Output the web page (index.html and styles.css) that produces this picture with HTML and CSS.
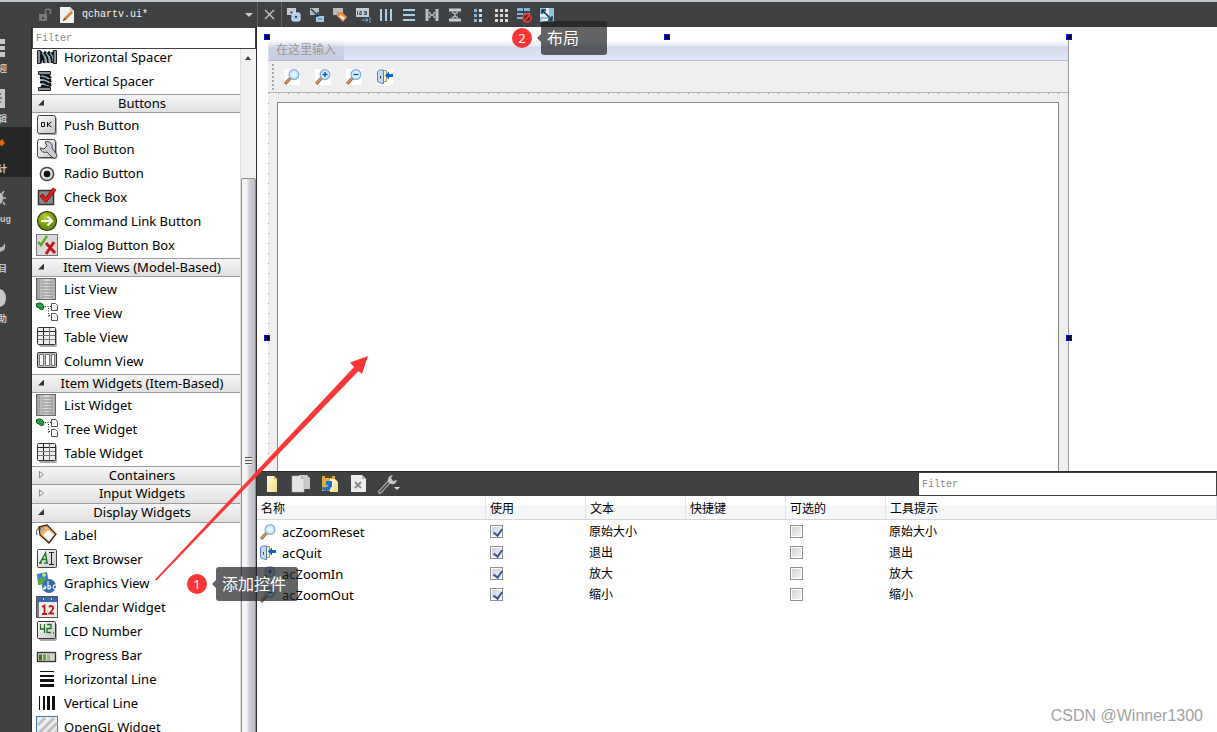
FILE: index.html
```html
<!DOCTYPE html>
<html lang="zh-CN">
<head>
<meta charset="utf-8">
<title>qchartv.ui</title>
<link rel="stylesheet" href="styles.css">
</head>
<body>
<svg class="defs" aria-hidden="true">
  <defs>
    <linearGradient id="gBtn" x1="0" y1="0" x2="1" y2="1"><stop offset="0" stop-color="#fff"/><stop offset="1" stop-color="#c4c4c4"/></linearGradient>
    <linearGradient id="gDark" x1="0" y1="0" x2="1" y2="0"><stop offset="0" stop-color="#999"/><stop offset=".5" stop-color="#ddd"/><stop offset="1" stop-color="#aaa"/></linearGradient>
    <radialGradient id="gGreen" cx=".4" cy=".3"><stop offset="0" stop-color="#b7d43a"/><stop offset="1" stop-color="#6d8f0c"/></radialGradient>
    <radialGradient id="gLens"><stop offset="0" stop-color="#f0fdff"/><stop offset="1" stop-color="#b9e6f4"/></radialGradient>
    <linearGradient id="gPage" x1="0" y1="0" x2="1" y2="1"><stop offset="0" stop-color="#fffce0"/><stop offset="1" stop-color="#f2dc7c"/></linearGradient>
  </defs>
  <symbol id="hspacer" viewBox="0 0 22 22"><path d="M4 6q3 3 0 11M4 6q5 4 4 11M8 6q5 4 4 11M12 6q5 4 4 11M16 6q3 4 2 10" stroke="#111" stroke-width="3" fill="none"/><path d="M6 7q4 4 3 9M10 7q4 4 3 9M14 7q4 4 3 9" stroke="#86a9bf" stroke-width="1.3" fill="none"/><path d="M1.500 4.500h3v13h-3zM17.500 4.500h3v13h-3z" fill="#8a908e" stroke="#222"/></symbol>
  <symbol id="vspacer" viewBox="0 0 22 22"><path d="M4 5q8 0 11 3M4 8q8 0 11 4M4 12q8 0 11 4M5 16h9M4 8l10-3M5 13l10-4M5 17l10-4" stroke="#111" stroke-width="2.400" fill="none"/><path d="M5 6q6 1 8 3M5 10q6 0 8 3M6 14l7 2" stroke="#86a9bf" stroke-width="1.300" fill="none"/><path d="M2.500 1.500h12v3h-12zM2.500 17.500h12v3h-12z" fill="#8a908e" stroke="#222"/></symbol>
  <symbol id="ok" viewBox="0 0 22 22"><rect x="2" y="3" width="19" height="18" rx="2" fill="#aaa"/><rect x="1.500" y="1.500" width="18" height="18" rx="2" fill="url(#gBtn)" stroke="#444"/><path d="M5.500 8.500h3v4h-3zM11.500 8v5M15.500 8l-3.500 2.500 3.500 2.500" fill="none" stroke="#111"/></symbol>
  <symbol id="tool" viewBox="0 0 22 22"><rect x="2" y="3" width="19" height="18" rx="2" fill="#aaa"/><rect x="1.500" y="1.500" width="18" height="18" rx="2" fill="url(#gBtn)" stroke="#444"/><path d="M9 4a5 5 0 0 1 7 6l5 7q0 4-4 3l-6-6a5 5 0 0 1-7-4l4 1 3-3z" fill="#c7cbd2" stroke="#444"/></symbol>
  <symbol id="radio" viewBox="0 0 22 22"><circle cx="11" cy="12" r="6.600" fill="url(#gBtn)" stroke="#444" stroke-width="1.500"/><circle cx="11" cy="12" r="3.300" fill="#111"/></symbol>
  <symbol id="check" viewBox="0 0 22 22"><rect x="2.500" y="4.500" width="15" height="14" fill="#8c8c8c" stroke="#333" stroke-width="1.500"/><path d="M4 10l3-2 2.500 4L17 2l3 2-9.500 12H9z" fill="#dc1f1f" stroke="#7d0909" stroke-width=".8"/></symbol>
  <symbol id="cmd" viewBox="0 0 22 22"><circle cx="11" cy="11" r="9.500" fill="url(#gGreen)" stroke="#2e3c05" stroke-width="1.200"/><path d="M5 11h11M11.500 6.500L16 11l-4.500 4.500" stroke="#fff" stroke-width="2.200" fill="none"/></symbol>
  <symbol id="dialog" viewBox="0 0 22 22"><rect x=".5" y=".5" width="21" height="21" fill="#d9d9d9" stroke="#777"/><path d="M2 8l3 3 6-9" fill="none" stroke="#59b02d" stroke-width="2.500"/><path d="M10 9l9 10M18 8l-8 12" stroke="#c0181f" stroke-width="3"/></symbol>
  <symbol id="list" viewBox="0 0 22 22"><rect x=".5" y=".5" width="19" height="21" fill="url(#gDark)" stroke="#666"/><path d="M3 4h1M6 4h11M3 7h1M6 7h11M3 10h1M6 10h11M3 13h1M6 13h11M3 16h1M6 16h11M3 19h1M6 19h11" stroke="#777" stroke-width=".8"/></symbol>
  <symbol id="tree" viewBox="0 0 22 22"><path d="M0 2q4-2 6-.5Q9 4 7.500 7 5 9 3 6 0 6 0 2z" fill="#2c9b3e" stroke="#125c20"/><path d="M9 4.500h6M12.500 6v9M13 13.500h3" stroke="#222" stroke-dasharray="1 1.500" fill="none"/><path d="M15.500 1.500h4l2 2v5h-6zM15.500 11.500h4l2 2v5h-6z" fill="#f4f4f4" stroke="#555"/></symbol>
  <symbol id="table" viewBox="0 0 22 22"><rect x="3" y="3" width="18" height="18" rx="2" fill="#aaa"/><rect x="1.500" y="1.500" width="18" height="17" rx="1" fill="#eee" stroke="#333"/><path d="M2 5.500h17M7.500 2v16" stroke="#222"/><path d="M2 9.500h17M2 13.500h17M13.500 2v16" stroke="#777"/></symbol>
  <symbol id="column" viewBox="0 0 22 22"><rect x="1.500" y="2.500" width="19" height="15" rx="1" fill="#bbb" stroke="#333"/><path d="M3.500 4.500h4v11h-4zM9.500 4.500h4v11h-4zM15.500 4.500h3v11h-3z" fill="#fff" stroke="#777"/></symbol>
  <symbol id="label" viewBox="0 0 22 22"><path d="M3 3l8-2 9 9-7 9L4 11z" fill="#eeb26e" stroke="#3c2814" stroke-width="1.300"/><path d="M12 6l6 5-5 6-6-6z" fill="#fff"/><circle cx="6" cy="5" r="1.300" fill="#fff" stroke="#444" stroke-width=".6"/><path d="M5 5Q-1 3 1 11" fill="none" stroke="#444"/></symbol>
  <symbol id="text" viewBox="0 0 22 22"><rect x="1.500" y="1.500" width="19" height="18" rx="1" fill="url(#gBtn)" stroke="#444"/><path d="M3 15h3M8 15h4M4 15l5.500-10L11 15M6 11.500h5" stroke="#217427" stroke-width="1.500" fill="none"/><path d="M13 4.500h5M15.500 5v11M13 16.500h5" stroke="#222" fill="none"/></symbol>
  <symbol id="graphics" viewBox="0 0 22 22"><path d="M1 2l10-2 2 11-11 2z" fill="#3c80dd"/><path d="M2 8l4-3 5 3 1 3-10 2z" fill="#5cad3f"/><circle cx="8" cy="3" r="1.800" fill="#f2e63b"/><circle cx="13" cy="14" r="7" fill="#3a6cab"/><path d="M7 15.500a1.500 1.500 0 1 0 2-1.500v3M12 9v8M12 14a1.600 1.600 0 1 1 0 2.500M20.500 13.500a2 2 0 1 0 0 3" fill="none" stroke="#fff" stroke-width="1.100"/></symbol>
  <symbol id="calendar" viewBox="0 0 22 22"><rect x=".5" y=".5" width="21" height="21" fill="#ececec" stroke="#555"/><path d="M1 1h20v5H1z" fill="#3968ad"/><path d="M7 3h1M15 3h1" stroke="#fff" stroke-width="1.500"/><path d="M1 6h2v15H1z" fill="#777"/><path d="M6 11l2.500-1.500V18M6 18h5M13 11q2-2 4 0 1 2-3.500 6.500H18" stroke="#bd1c25" stroke-width="1.800" fill="none"/></symbol>
  <symbol id="lcd" viewBox="0 0 22 22"><rect x="3" y="3" width="18" height="18" rx="2" fill="#aaa"/><rect x="1.500" y="1.500" width="18" height="17" rx="1" fill="url(#gBtn)" stroke="#333"/><path d="M4.500 4v5h4M8.500 4v9M11 4.500h4v4h-4v4h4M17 13h1" fill="none" stroke="#1b6e22" stroke-width="1.300"/></symbol>
  <symbol id="progress" viewBox="0 0 22 22"><rect x="1.500" y="8.500" width="18" height="9" fill="#cfd6ca" stroke="#333" stroke-width="1.300"/><path d="M3 10.500h3v6H3z" fill="#3c7514"/><path d="M7 10.500h3v6H7z" fill="#6e9750"/><path d="M11 10.500h3v6h-3z" fill="#a0b490"/></symbol>
  <symbol id="hline" viewBox="0 0 22 22"><path d="M4 3.500h14" stroke="#111"/><path d="M4 8h14" stroke="#111" stroke-width="2"/><path d="M4 12.500h14" stroke="#111" stroke-width="3"/><path d="M4 17.500h14" stroke="#111" stroke-width="3"/></symbol>
  <symbol id="vline" viewBox="0 0 22 22"><path d="M3.500 4v14" stroke="#111"/><path d="M8 4v14" stroke="#111" stroke-width="2"/><path d="M12.500 4v14" stroke="#111" stroke-width="3"/><path d="M17.500 4v14" stroke="#111" stroke-width="3"/></symbol>
  <symbol id="opengl" viewBox="0 0 22 22"><rect x=".5" y=".5" width="21" height="21" fill="#eee" stroke="#3d79c2"/><path d="M2 9l7-7M2 18L18 2M7 21L21 7M15 21l6-6" stroke="#c0c0c0" stroke-width="3"/></symbol>

  <symbol id="zoom" viewBox="0 0 16 16"><path d="M1 15l5.500-6" stroke="#7c5a3a" stroke-width="3"/><path d="M1 14.500L6 9.500" stroke="#eea04a" stroke-width="1.500"/><circle cx="10" cy="5.500" r="4.900" fill="url(#gLens)" stroke="#8fa9dc" stroke-width="1.200"/></symbol>
  <symbol id="zoomin" viewBox="0 0 16 16"><use href="#zoom"/><path d="M7.500 5.500h5M10 3v5" stroke="#1350b0" stroke-width="1.400"/></symbol>
  <symbol id="zoomout" viewBox="0 0 16 16"><use href="#zoom"/><path d="M7.500 5.500h5" stroke="#1350b0" stroke-width="1.400"/></symbol>
  <symbol id="quit" viewBox="0 0 16 16"><path d="M5.500 1.500h4v11h-4z" fill="#ffefb0" stroke="#9c9378"/><path d="M.5 2.500l2-1.500h4v13.500l-3-.5-3-1.500z" fill="#c3daf6" stroke="#5c7cb4"/><path d="M3.500 7v2.500" stroke="#234"/><path d="M8 6.500L12 2.500v2.500h4v3h-4v2.500z" fill="#0a63d0"/></symbol>
</svg>

<div class="app">
  <header class="topbar">
    <div class="docbar">
      <svg width="14" height="14" viewBox="0 0 14 14"><path d="M1 6h8v7H1z" fill="#77797b"/><path d="M7.500 6V3q0-2 2.500-2t2.500 2v3" fill="none" stroke="#77797b" stroke-width="1.600"/><path d="M4 9h2v2H4z" fill="#404142"/></svg>
      <svg width="14" height="16" viewBox="0 0 14 16"><path d="M0 0h10l4 4v12H0z" fill="#f1f1f1"/><path d="M10 0v4h4" fill="#ccc"/><path d="M3 14l1-3 7-7 2 1.500L6 13z" fill="#d58328"/><path d="M3 14l1-3 1.500 1.500z" fill="#333"/></svg>
      <span class="docname">qchartv.ui*</span>
      <button class="drop" aria-label="打开文档列表"></button>
    </div>
    <button class="tb close" aria-label="关闭"><svg width="11" height="11" viewBox="0 0 11 11"><path d="M1 1l9 9M10 1l-9 9" stroke="#c8c8c8" stroke-width="1.300"/></svg></button>
    <nav class="tools">
      <button class="tb" aria-label="编辑控件"><svg width="16" height="16" viewBox="0 0 16 16"><path d="M1 1h9v7H1z" fill="#c9cbcc"/><path d="M6 6h8v8H6z" fill="#a9c9ee" stroke="#dde8f4" /><path d="M9 9h2v2H9z" fill="#1a4e86"/><path d="M4.500 4.500h2v2h-2zM13.500 4.500h2v2h-2zM4.500 13.500h2v2h-2zM13.500 13.500h2v2h-2z" fill="#2a3f58"/></svg></button>
      <button class="tb" aria-label="编辑信号/槽"><svg width="16" height="16" viewBox="0 0 16 16"><path d="M1 1h9v7H1z" fill="#b9bcbd"/><path d="M7 9h8v6H7z" fill="#a6c8e6"/><path d="M9 12h4" stroke="#416f99"/><path d="M2 2l7 7M9 5v4H5" stroke="#1c3850" stroke-width="1.400" fill="none"/></svg></button>
      <button class="tb" aria-label="编辑伙伴"><svg width="16" height="16" viewBox="0 0 16 16"><path d="M1 1h10v7H1z" fill="#b9bcbd"/><path d="M5 5h5l5 5-4 5-6-6z" fill="#e98b4c"/><path d="M9 8l4 3-2 2-4-4z" fill="#fff3df"/></svg></button>
      <button class="tb" aria-label="编辑 Tab 顺序"><svg width="16" height="16" viewBox="0 0 16 16"><path d="M1 1h13v9H1z" fill="#c7cbd0"/><path d="M2.500 4v4M4.500 4.500h2v1.500h-2v1.500h2.500M9 4.500h2.500v3H9M9 6h2" stroke="#34536f" fill="none"/><path d="M7 13h6M11 11l2 2-2 2M15 10v6" stroke="#73a9e0" fill="none"/></svg></button>
      <button class="tb" aria-label="水平布局"><svg width="16" height="16" viewBox="0 0 16 16"><path d="M3 2v12M8 2v12M13 2v12" stroke="#a9cfe9" stroke-width="2"/></svg></button>
      <button class="tb" aria-label="垂直布局"><svg width="16" height="16" viewBox="0 0 16 16"><path d="M2 3h12M2 8h12M2 13h12" stroke="#a9cfe9" stroke-width="2"/></svg></button>
      <button class="tb" aria-label="水平分裂器"><svg width="16" height="16" viewBox="0 0 16 16"><path d="M3 2v12M13 2v12" stroke="#b7c0c4" stroke-width="3"/><path d="M5 5l2 3-2 3M11 5L9 8l2 3M6 8h4" stroke="#a8acae" stroke-width="1.500" fill="none"/></svg></button>
      <button class="tb" aria-label="垂直分裂器"><svg width="16" height="16" viewBox="0 0 16 16"><path d="M2 3h12M2 13h12" stroke="#c9cdcf" stroke-width="3"/><path d="M5 5l3 2 3-2M5 11l3-2 3 2M8 6v4" stroke="#b8bcbe" stroke-width="1.500" fill="none"/></svg></button>
      <button class="tb" aria-label="表单布局"><svg width="16" height="16" viewBox="0 0 16 16"><path d="M4 2h3v3H4zM4 7h3v3H4zM4 12h3v3H4z" fill="#88b4dc"/><path d="M9 2h3v3H9zM9 7h3v3H9zM9 12h3v3H9z" fill="#c3dff4"/></svg></button>
      <button class="tb" aria-label="栅格布局"><svg width="16" height="16" viewBox="0 0 16 16"><path d="M2 2h3v3H2zM7 2h3v3H7zM12 2h3v3h-3zM2 7h3v3H2zM7 7h3v3H7zM12 7h3v3h-3zM2 12h3v3H2zM7 12h3v3H7zM12 12h3v3h-3z" fill="#d6d8d6"/></svg></button>
      <button class="tb" aria-label="打破布局"><svg width="16" height="16" viewBox="0 0 16 16"><path d="M1 1h6v3H1zM8 1h6v3H8zM1 6h6v2H1zM8 6h6v2H8zM1 10h6v2H1z" fill="#7fb4de"/><circle cx="11" cy="11" r="4" fill="#59201f" stroke="#d8403b" stroke-width="1.800"/><path d="M8 14l6-6" stroke="#d8403b" stroke-width="1.800"/></svg></button>
      <button class="tb" aria-label="调整大小"><svg width="16" height="16" viewBox="0 0 16 16"><path d="M1 1h14v14H1z" fill="#8fc3de"/><path d="M1 10h9V1H7v6H1zM3 12h6v3H3z" fill="#e4eef4"/><path d="M3 3l10 10M3 7V3h4M9 13h4V9" stroke="#14364b" stroke-width="1.500" fill="none"/></svg></button>
    </nav>
  </header>

  <div class="body">
    <nav class="modes">
      <button class="mode"><svg width="8" height="22" viewBox="0 0 8 22"><path d="M0 2h5v5H0zM0 9h5v4H0zM0 15h5v5H0z" fill="#c4c6c7"/></svg><span>欢迎</span></button>
      <button class="mode"><svg width="8" height="22" viewBox="0 0 8 22"><path d="M0 2h5v19H0z" fill="#c4c6c7"/><path d="M0 7h1M0 11h2M0 15h1" stroke="#333"/></svg><span>编辑</span></button>
      <button class="mode active"><svg width="8" height="22" viewBox="0 0 8 22"><path d="M0 4l2-2 3 4-3 3-2-1z" fill="#d76b0a"/></svg><span>设计</span></button>
      <button class="mode"><svg width="8" height="22" viewBox="0 0 8 22"><path d="M0 6q3 0 3 5t-3 6z" fill="#b9bbbc"/><path d="M2 7l2-3M3 11h3M3 15l2 3" stroke="#b9bbbc" stroke-width="1.500"/></svg><span class="wide">Debug</span></button>
      <button class="mode"><svg width="8" height="22" viewBox="0 0 8 22"><path d="M0 10q3 1 5-4 1 7-3 8l-2 1z" fill="#b9bbbc"/></svg><span>项目</span></button>
      <button class="mode"><svg width="8" height="22" viewBox="0 0 8 22"><path d="M0 2q6 2 6 9t-6 9z" fill="#c4c6c7"/></svg><span>帮助</span></button>
    </nav>

    <aside class="widgets">
      <input class="filter" type="text" placeholder="Filter" aria-label="过滤控件">
      <div class="scroller">
        <div class="tree">
          <ul class="items first">
            <li><svg><use href="#hspacer"/></svg>Horizontal Spacer</li>
            <li><svg><use href="#vspacer"/></svg>Vertical Spacer</li>
          </ul>
          <h3 class="cat open">Buttons</h3>
          <ul class="items">
            <li><svg><use href="#ok"/></svg>Push Button</li>
            <li><svg><use href="#tool"/></svg>Tool Button</li>
            <li><svg><use href="#radio"/></svg>Radio Button</li>
            <li><svg><use href="#check"/></svg>Check Box</li>
            <li><svg><use href="#cmd"/></svg>Command Link Button</li>
            <li><svg><use href="#dialog"/></svg>Dialog Button Box</li>
          </ul>
          <h3 class="cat open">Item Views (Model-Based)</h3>
          <ul class="items">
            <li><svg><use href="#list"/></svg>List View</li>
            <li><svg><use href="#tree"/></svg>Tree View</li>
            <li><svg><use href="#table"/></svg>Table View</li>
            <li><svg><use href="#column"/></svg>Column View</li>
          </ul>
          <h3 class="cat open">Item Widgets (Item-Based)</h3>
          <ul class="items">
            <li><svg><use href="#list"/></svg>List Widget</li>
            <li><svg><use href="#tree"/></svg>Tree Widget</li>
            <li><svg><use href="#table"/></svg>Table Widget</li>
          </ul>
          <h3 class="cat">Containers</h3>
          <h3 class="cat">Input Widgets</h3>
          <h3 class="cat open">Display Widgets</h3>
          <ul class="items">
            <li><svg><use href="#label"/></svg>Label</li>
            <li><svg><use href="#text"/></svg>Text Browser</li>
            <li><svg><use href="#graphics"/></svg>Graphics View</li>
            <li><svg><use href="#calendar"/></svg>Calendar Widget</li>
            <li><svg><use href="#lcd"/></svg>LCD Number</li>
            <li><svg><use href="#progress"/></svg>Progress Bar</li>
            <li><svg><use href="#hline"/></svg>Horizontal Line</li>
            <li><svg><use href="#vline"/></svg>Vertical Line</li>
            <li><svg><use href="#opengl"/></svg>OpenGL Widget</li>
          </ul>
        </div>
        <div class="scrollbar"><span class="up"></span><div class="thumb"><i></i></div></div>
      </div>
    </aside>

    <main class="work">
      <section class="canvas">
        <div class="form">
          <div class="menubar"><span>在这里输入</span></div>
          <div class="formtools">
            <i class="grip"></i>
            <button aria-label="原始大小"><svg><use href="#zoom"/></svg></button>
            <button aria-label="放大"><svg><use href="#zoomin"/></svg></button>
            <button aria-label="缩小"><svg><use href="#zoomout"/></svg></button>
            <button aria-label="退出"><svg><use href="#quit"/></svg></button>
          </div>
          <div class="central"><div class="view"></div></div>
          <i class="handle nw"></i><i class="handle n"></i><i class="handle ne"></i><i class="handle w"></i><i class="handle e"></i>
        </div>
      </section>

      <section class="actions">
        <div class="actionbar">
          <button aria-label="新建"><svg width="20" height="20" viewBox="0 0 20 20"><path d="M5 2h7l3 3v13H5z" fill="url(#gPage)"/><path d="M12 2v3h3" fill="#d9bb50"/></svg></button>
          <button aria-label="复制"><svg width="20" height="20" viewBox="0 0 20 20"><path d="M8 1h8l3 3v11H8z" fill="#c9c9c9"/><path d="M1 2h9l3 3v13H1z" fill="#e3e3e3" stroke="#b5b5b5" stroke-width=".6"/><path d="M10 2v3h3" fill="#aaa"/></svg></button>
          <button aria-label="粘贴"><svg width="20" height="20" viewBox="0 0 20 20"><path d="M2 2h13v15H2z" fill="#e0af35"/><path d="M5 1h7v3H5z" fill="#5b4515"/><path d="M10 5h5l3 3v10h-8z" fill="url(#gPage)"/><path d="M2 13q6 1 6-2H6V7h6v6h-1q-1 4-5 4-4 0-4-4z" fill="#1c74d2"/></svg></button>
          <button aria-label="删除"><svg width="20" height="20" viewBox="0 0 20 20"><path d="M2 1h11l4 4v13H2z" fill="#ededed"/><path d="M13 1v4h4" fill="#bbb"/><path d="M6 8l6 6M12 8l-6 6" stroke="#8a8a8a" stroke-width="2"/></svg></button>
          <button aria-label="配置"><svg width="22" height="20" viewBox="0 0 22 20"><path d="M2 18l9-10" stroke="#aaa" stroke-width="4" stroke-linecap="round"/><path d="M2 18l9-10" stroke="#444" stroke-width="1.400" stroke-linecap="round"/><path d="M10 8q-1-6 5-7l-2 3 2 3 4-1q-1 5-6 4z" fill="#c6c6c6"/><path d="M16 13h6l-3 3z" fill="#ddd"/></svg></button>
          <input class="filter" type="text" placeholder="Filter" aria-label="过滤动作">
        </div>
        <table class="grid">
          <colgroup><col class="c-name"><col class="c"><col class="c"><col class="c"><col class="c"><col></colgroup>
          <thead><tr><th>名称</th><th>使用</th><th>文本</th><th>快捷键</th><th>可选的</th><th>工具提示</th></tr></thead>
          <tbody>
            <tr><td><div class="act"><svg><use href="#zoom"/></svg>acZoomReset</div></td><td><input type="checkbox" aria-label="使用 acZoomReset" checked></td><td>原始大小</td><td></td><td><input type="checkbox" aria-label="可选 acZoomReset"></td><td>原始大小</td></tr>
            <tr><td><div class="act"><svg><use href="#quit"/></svg>acQuit</div></td><td><input type="checkbox" aria-label="使用 acQuit" checked></td><td>退出</td><td></td><td><input type="checkbox" aria-label="可选 acQuit"></td><td>退出</td></tr>
            <tr><td><div class="act"><svg><use href="#zoomin"/></svg>acZoomIn</div></td><td><input type="checkbox" aria-label="使用 acZoomIn" checked></td><td>放大</td><td></td><td><input type="checkbox" aria-label="可选 acZoomIn"></td><td>放大</td></tr>
            <tr><td><div class="act"><svg><use href="#zoomout"/></svg>acZoomOut</div></td><td><input type="checkbox" aria-label="使用 acZoomOut" checked></td><td>缩小</td><td></td><td><input type="checkbox" aria-label="可选 acZoomOut"></td><td>缩小</td></tr>
          </tbody>
        </table>
        <p class="watermark">CSDN @Winner1300</p>
      </section>
    </main>
  </div>

  <svg class="arrow" width="220" height="230" viewBox="0 0 220 230"><path d="M0 225.500L199 13l-4-4.500L213 2l-6 18-3.500-3L1.500 226.500z" fill="#fb3838"/></svg>
  <div class="note one"><b>1</b><span>添加控件</span></div>
  <div class="note two"><b>2</b><span>布局</span></div>
</div>
</body>
</html>
```
FILE: styles.css
```css
* { box-sizing: border-box; }
body {
  margin: 0;
  font: 13px/18px "Noto Sans", "Noto Sans CJK SC", sans-serif;
  color: #000;
  background: #fff;
}
button { border: 0; padding: 0; margin: 0; background: none; font: inherit; color: inherit; }
.defs { position: absolute; width: 0; height: 0; }
.app { position: relative; height: 100vh; display: flex; flex-direction: column; overflow: hidden; }

/* top tool bar */
.topbar {
  flex: none;
  height: 27px;
  display: flex;
  align-items: stretch;
  padding-left: 32px;
  background: #404142;
  border-top: 2px solid #c3c6c9;
}
.docbar { width: 225px; display: flex; align-items: center; gap: 8px; padding: 0 4px 0 6px; color: #f4f4f4; }
.docname { flex: 1; font: 10px/16px "Liberation Mono", monospace; }
.drop { border: 4px solid transparent; border-top-color: #ccc; border-bottom-width: 0; }
.tb { width: 23px; display: flex; align-items: center; justify-content: center; }
.close { width: 25px; border-left: 1px solid #626364; border-right: 1px solid #626364; }
.tools { display: flex; }

.body { flex: 1; min-height: 0; display: flex; }

/* mode selector */
.modes {
  flex: none;
  width: 32px;
  background: #404142;
  border-right: 1px solid #2a2b2c;
  overflow: hidden;
}
.mode { display: block; width: 31px; height: 50px; padding-top: 10px; color: #c4c6c7; }
.mode.active { background: #252627; }
.mode svg { display: block; }
.mode span {
  display: flex;
  justify-content: flex-end;
  width: 7px;
  overflow: hidden;
  white-space: nowrap;
  font: bold 9px/20px "Liberation Sans", "Noto Sans CJK SC", sans-serif;
}
.mode .wide { width: 11px; }

/* widget box */
.widgets {
  flex: none;
  width: 225px;
  display: flex;
  flex-direction: column;
  border-right: 1px solid #2f3031;
}
.filter {
  height: 22px;
  border: 1px solid #404142;
  padding: 0 3px;
  background: #fff;
  font: 10px/16px "Liberation Mono", monospace;
}
.filter::placeholder { color: #888; opacity: 1; }
.scroller { flex: 1; min-height: 0; display: flex; }
.tree { flex: 1; overflow: hidden; }
.items { list-style: none; margin: 0; padding: 0 0 1px; }
.items.first { margin-top: -4px; }
.items li { display: flex; align-items: center; gap: 6px; height: 24px; padding-left: 4px; white-space: nowrap; }
.items svg { width: 22px; height: 22px; flex: none; }
.cat {
  display: flex;
  align-items: center;
  justify-content: center;
  position: relative;
  height: 19px;
  margin: 0;
  padding: 0 0 2px 12px;
  font-size: 13px;
  line-height: 16px;
  font-weight: 400;
  background: linear-gradient(#f6f6f6, #e0e0e0);
  border-bottom: 1px solid #9c9c9c;
}
.items + .cat { border-top: 1px solid #9c9c9c; }
.cat::before {
  content: "";
  position: absolute;
  left: 7px;
  width: 5px;
  height: 8px;
  background: #8d8d8d;
  clip-path: polygon(0 0, 100% 50%, 0 100%, 0 0, 1px 2px, 1px 6px, 4px 4px, 1px 2px);
}
.cat.open::before { left: 6px; width: 6px; height: 6px; background: #333; clip-path: polygon(100% 0, 100% 100%, 0 100%); }
.scrollbar {
  width: 16px;
  display: flex;
  flex-direction: column;
  background: #f1f1f1;
  border-left: 1px solid #ddd;
  overflow: hidden;
}
.up { flex: none; margin: 7px 0 118px 4px; width: 0; height: 0; border: 3px solid transparent; border-top-width: 0; border-bottom: 4px solid #444; }
.thumb {
  flex: none;
  height: 566px;
  display: flex;
  align-items: center;
  justify-content: center;
  background: linear-gradient(90deg, #f5f5f5 35%, #d0d1d5 55%, #bdbec4);
  border: 1px solid #8e8e92;
  border-radius: 2px;
}
.thumb i { width: 7px; height: 8px; background: repeating-linear-gradient(#555 0 1px, #eee 1px 3px); }

/* design canvas */
.work { flex: 1; min-width: 0; display: flex; flex-direction: column; }
.canvas { flex: 1; min-height: 0; padding: 11px 148px 0 11px; overflow: hidden; }
.form { position: relative; height: 602px; display: flex; flex-direction: column; border-right: 1px solid #9c9c9f; background: #efefef; }
.menubar {
  flex: none;
  height: 23px;
  padding-left: 1px;
  background: linear-gradient(#fff 2px, #e6eaf5 8px, #d3d9eb 9px, #e0e5f7 22px);
  border-bottom: 1px solid #b3bad0;
}
.menubar span {
  display: inline-block;
  padding: 3px 8px 1px 7px;
  color: #9b9a96;
  font-size: 12px;
  background: linear-gradient(rgba(175, 184, 210, 0), rgba(165, 174, 200, .45));
}
.formtools { flex: none; height: 32px; display: flex; align-items: center; gap: 15px; padding: 0 4px; border-bottom: 1px solid #b4b4b4; }
.grip { width: 2px; height: 26px; margin-right: -5px; background: repeating-linear-gradient(#aaa 0 2px, transparent 2px 4px); }
.formtools button { width: 16px; height: 16px; background: #fff; }
.formtools svg { display: block; width: 16px; height: 16px; }
.central {
  flex: 1;
  padding: 9px;
  background:
    repeating-linear-gradient(90deg, #999 0 1px, transparent 1px 10px) 0 0 / 100% 1px no-repeat,
    repeating-linear-gradient(#999 0 1px, transparent 1px 10px) 0 0 / 1px 100% no-repeat;
}
.view { height: 100%; background: #fff; border: 1px solid #868b92; }
.handle { position: absolute; width: 6px; height: 6px; margin: -4px; background: #000; border: 1px solid #00f; }
.nw, .w { left: 0; }
.nw, .n, .ne { top: 0; }
.n { left: 50%; }
.ne, .e { right: 0; }
.w, .e { top: 50%; }

/* action editor */
.actions { flex: 0 0 261px; position: relative; background: #fff; }
.actionbar { height: 25px; display: flex; align-items: center; gap: 9px; padding-left: 5px; background: #404142; border-top: 1px solid #29292a; }
.actionbar button, .actionbar svg { display: block; }
.actionbar .filter { width: 299px; height: 24px; margin-left: auto; }
.grid { width: 100%; table-layout: fixed; border-collapse: separate; border-spacing: 0; font-size: 13px; }
.c-name { width: 229px; }
.c { width: 100px; }
.grid th {
  height: 24px;
  padding: 2px 4px 0;
  text-align: left;
  font-size: 12px;
  font-weight: 400;
  background: linear-gradient(#fff 40%, #f5f6f8 42%, #f7f8fa);
  border-bottom: 1px solid #d5d5d5;
  border-right: 1px solid #e3e5e8;
}
.grid td { height: 21px; padding: 0 3px; font-size: 12px; }
.grid tbody tr:first-child td { height: 22px; padding-top: 1px; }
.act { display: flex; align-items: center; gap: 6px; font-size: 13px; }
.act svg { width: 16px; height: 16px; }
.grid input {
  appearance: none;
  display: block;
  width: 13px;
  height: 13px;
  margin: 0 0 0 1px;
  border: 1px solid #8e8f8f;
  background: linear-gradient(135deg, #cdd1d8, #f6f6f6) content-box;
  padding: 1px;
}
.grid input:checked::after {
  content: "";
  display: block;
  width: 4px;
  height: 7px;
  margin-left: 3px;
  border: solid #3a54a0;
  border-width: 0 2px 2px 0;
  transform: rotate(35deg);
}
.watermark {
  position: absolute;
  right: 14px;
  bottom: 6px;
  margin: 0;
  font: 16px/20px "Liberation Sans", sans-serif;
  color: #a3a3a3;
}

/* annotations */
.arrow { position: absolute; left: 155px; top: 354px; }
.note { position: absolute; display: flex; align-items: center; gap: 9px; color: #fff; }
.note b {
  width: 20px;
  height: 20px;
  border-radius: 50%;
  background: #fb3434;
  font: 13px/20px "Noto Sans", sans-serif;
  text-align: center;
}
.note span {
  position: relative;
  min-width: 66px;
  height: 34px;
  padding: 0 12px 0 6px;
  border-radius: 3px;
  background: rgba(32, 33, 34, .7);
  font-size: 16px;
  line-height: 34px;
}
.note span::before { content: ""; position: absolute; left: -4px; top: 13px; border: 4px solid transparent; border-left-width: 0; border-right-color: rgba(32, 33, 34, .7); }
.one { left: 187px; top: 567px; }
.two { left: 512px; top: 21px; }
```
